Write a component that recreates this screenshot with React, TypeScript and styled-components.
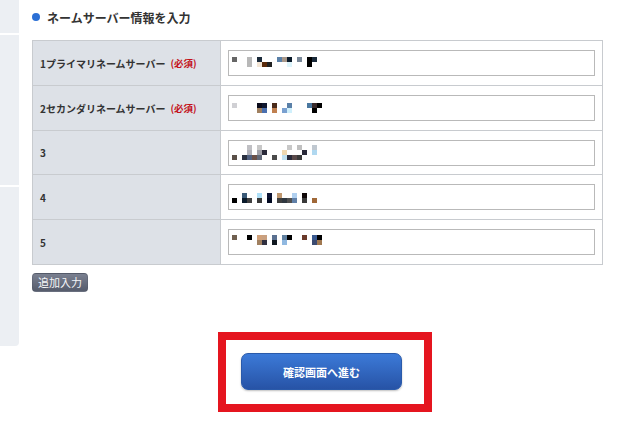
import React from 'react';
import styled, { createGlobalStyle } from 'styled-components';

const GlobalStyle = createGlobalStyle`
  html, body { margin: 0; padding: 0; background: #fff; }
  body { font-family: "Noto Sans CJK JP", "Noto Sans", sans-serif; color: #333; }
  * { box-sizing: border-box; }
`;

const Page = styled.div`
  display: flex;
  align-items: flex-start;
  width: 640px;
  height: 425px;
  overflow: hidden;
`;

const Sidebar = styled.aside`
  width: 19px;
  height: 346px;
  flex: none;
  display: flex;
  flex-direction: column;
  gap: 2px;
  border-bottom-right-radius: 4px;
  overflow: hidden;
`;

const SideBlock = styled.div<{ $h?: number }>`
  background: #eceff3;
  height: ${p => (p.$h ? `${p.$h}px` : 'auto')};
  flex: ${p => (p.$h ? 'none' : '1')};
`;

const Main = styled.main`
  margin-left: 13px;
  width: 571px;
  display: flex;
  flex-direction: column;
  align-items: flex-start;
`;

const Heading = styled.h2`
  margin: 0;
  height: 40px;
  padding-bottom: 6px;
  display: flex;
  align-items: center;
  gap: 7px;
  font-size: 12px;
  font-weight: bold;
  color: #333;
`;

const Bullet = styled.span`
  width: 8px;
  height: 8px;
  border-radius: 50%;
  background: #2b6fd5;
`;

const Table = styled.div`
  width: 571px;
  border: 1px solid #c8cbcf;
`;

const Row = styled.div<{ $h: number }>`
  display: grid;
  grid-template-columns: 188px 1fr;
  height: ${p => p.$h}px;
  & + & { border-top: 1px solid #c8cbcf; }
`;

const Label = styled.div`
  background: #dde1e7;
  border-right: 1px solid #c8cbcf;
  display: flex;
  align-items: center;
  padding-left: 7px;
  font-size: 10px;
  font-weight: bold;
  color: #333;
  white-space: nowrap;
`;

const Required = styled.span`
  color: #c3121b;
  font-size: 9.5px;
  margin-left: 5px;
`;

const InputCell = styled.div`
  background: #fff;
  display: flex;
  align-items: center;
  padding-left: 7px;
`;

const FakeInput = styled.div`
  width: 367px;
  height: 26px;
  border: 1px solid #b9b9b9;
  background: #fff;
  display: flex;
`;

const AddButton = styled.button`
  margin-top: 8px;
  width: 56px;
  height: 19px;
  padding: 0;
  border: 1px solid #50566360;
  border-radius: 4px;
  background: linear-gradient(#7a8090, #565c6c);
  color: #f4f5f7;
  font-family: inherit;
  font-size: 11px;
  line-height: 17px;
  cursor: pointer;
`;

const Highlight = styled.div`
  margin-top: 40px;
  margin-left: 186px;
  width: 214px;
  height: 80px;
  border: 8px solid #e5151f;
  padding: 13px 0 0 15px;
`;

const SubmitButton = styled.button`
  width: 161px;
  height: 37px;
  border: 1px solid #2a5aaa;
  border-radius: 7px;
  background: linear-gradient(#3c7ad8, #2753a6);
  color: #fff;
  font-family: inherit;
  font-size: 11px;
  font-weight: bold;
  box-shadow: 0 1px 2px rgba(0, 0, 0, 0.25);
  cursor: pointer;
`;

type Cell = [number, number, string];

const Mosaic: React.FC<{ base: number; cells: Cell[] }> = ({ base, cells }) => (
  <svg width="120" height="24" viewBox="0 0 120 24">
    {cells.map(([c, r, color], i) => (
      <rect key={i} x={3 + c * 5} y={base + r * 5} width={5} height={5} fill={color} />
    ))}
  </svg>
);

const rows: { label: string; required?: boolean; h: number; base: number; cells: Cell[] }[] = [
  {
    label: '1プライマリネームサーバー',
    required: true,
    h: 44,
    base: 6,
    cells: [
      [0, 0, '#666'], [3, 0, '#b8b8b8'], [3, 1, '#b8b8b8'], [5, 0, '#1a2a3a'], [5, 1, '#f2e4d4'],
      [6, 1, '#5a2a0a'], [7, 1, '#222'], [9, 0, '#5a80a8'], [10, 0, '#a8988a'], [11, 0, '#0a1a2a'],
      [11, 1, '#ddf4fb'], [13, 0, '#7a8898'], [15, 0, '#000'], [16, 0, '#1a2a3a'], [15, 1, '#000'],
    ],
  },
  {
    label: '2セカンダリネームサーバー',
    required: true,
    h: 45,
    base: 7,
    cells: [
      [0, 0, '#d0d0d4'], [5, 0, '#0a0a1a'], [6, 0, '#101830'], [5, 1, '#a08060'], [6, 1, '#4a70b0'],
      [8, 0, '#4a2a1a'], [8, 1, '#c08050'], [11, 0, '#5a80a8'], [10, 1, '#7aa0d0'], [11, 1, '#d0f0fc'],
      [15, 0, '#4a78a0'], [16, 0, '#3a2a2a'], [17, 0, '#000'], [16, 1, '#000'],
    ],
  },
  {
    label: '3',
    h: 44,
    base: 4,
    cells: [
      [0, 2, '#5a5048'], [2, 2, '#2a3040'], [3, 0, '#c0c0c4'], [3, 1, '#b0b0b8'], [3, 2, '#506080'],
      [4, 2, '#6a5048'], [5, 0, '#c8c8c8'], [5, 1, '#a0a0a8'], [5, 2, '#606878'], [6, 1, '#2a2a3a'],
      [8, 2, '#4a4a4a'], [10, 1, '#f0d8b0'], [10, 2, '#c0e0f0'], [11, 0, '#c8c8c8'], [11, 2, '#2a2a3a'],
      [12, 2, '#5a4a4a'], [13, 0, '#c0c0c0'], [13, 2, '#3a3a3a'], [14, 1, '#2a2a3a'], [16, 0, '#c0c8d0'],
      [16, 1, '#b0d8f0'],
    ],
  },
  {
    label: '4',
    h: 45,
    base: 8,
    cells: [
      [0, 1, '#000'], [2, 0, '#3a5a78'], [2, 1, '#0a1a2a'], [3, 1, '#404040'], [5, 0, '#b0e0f8'],
      [5, 1, '#3a3a3a'], [7, 0, '#0a1030'], [7, 1, '#000820'], [9, 0, '#c09870'], [9, 1, '#404040'],
      [10, 1, '#303840'], [11, 1, '#505050'], [12, 0, '#b0d0f0'], [12, 1, '#6080a8'], [14, 0, '#100808'],
      [14, 1, '#3a3a3a'], [16, 1, '#a06838'],
    ],
  },
  {
    label: '5',
    h: 45,
    base: 5,
    cells: [
      [0, 0, '#706050'], [3, 0, '#000'], [5, 0, '#d0a078'], [6, 0, '#c8a080'], [5, 1, '#a08060'],
      [6, 1, '#303040'], [8, 0, '#5a7090'], [8, 1, '#101820'], [10, 0, '#6080a0'], [11, 0, '#000'],
      [10, 1, '#90b8e0'], [14, 0, '#6a3a2a'], [16, 0, '#3a5a90'], [17, 0, '#000'], [16, 1, '#3a4a70'],
      [17, 1, '#a07850'],
    ],
  },
];

export default function App() {
  return (
    <>
      <GlobalStyle />
      <Page>
        <Sidebar>
          <SideBlock $h={33} />
          <SideBlock $h={150} />
          <SideBlock />
        </Sidebar>
        <Main>
          <Heading>
            <Bullet />
            ネームサーバー情報を入力
          </Heading>
          <Table>
            {rows.map(r => (
              <Row key={r.label} $h={r.h}>
                <Label>
                  {r.label}
                  {r.required && <Required>(必須)</Required>}
                </Label>
                <InputCell>
                  <FakeInput>
                    <Mosaic base={r.base} cells={r.cells} />
                  </FakeInput>
                </InputCell>
              </Row>
            ))}
          </Table>
          <AddButton>追加入力</AddButton>
          <Highlight>
            <SubmitButton>確認画面へ進む</SubmitButton>
          </Highlight>
        </Main>
      </Page>
    </>
  );
}
